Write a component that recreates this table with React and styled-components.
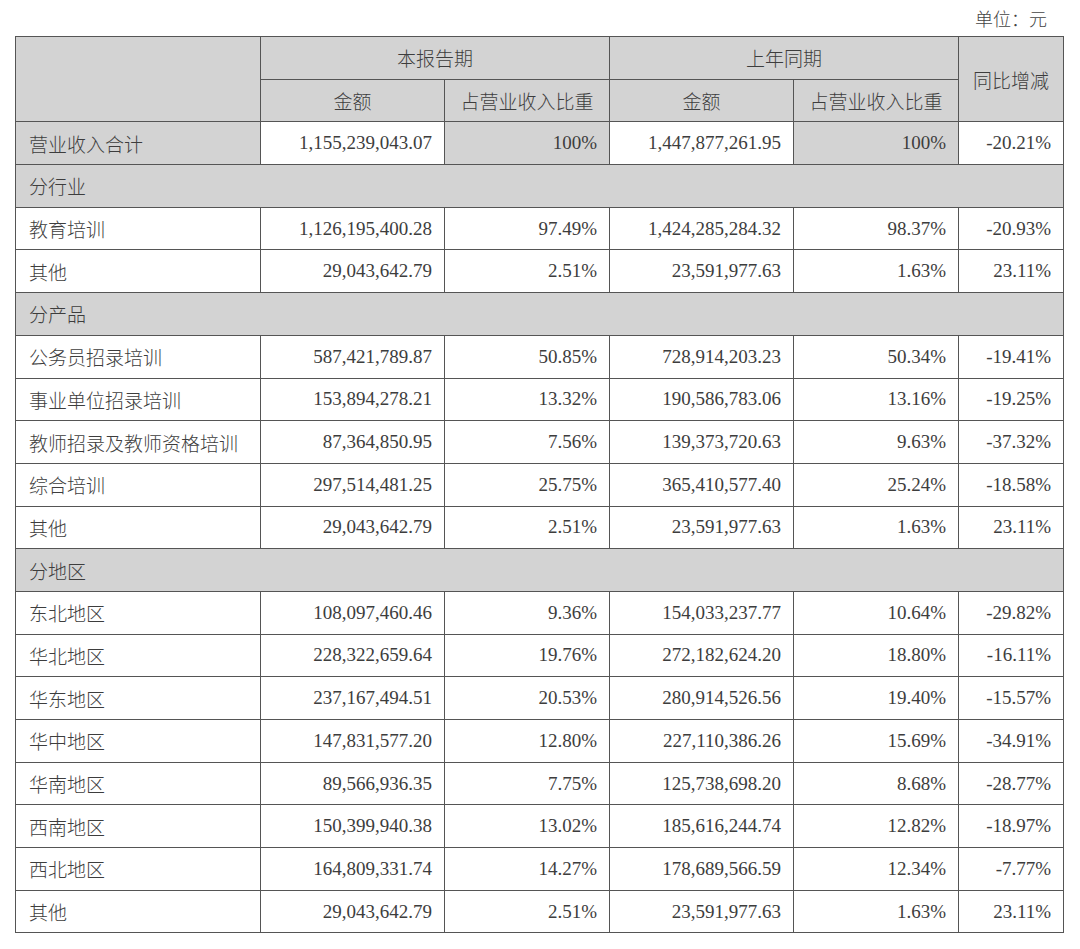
import React from 'react';
import styled, { createGlobalStyle } from 'styled-components';

const GlobalStyle = createGlobalStyle`
  body {
    margin: 0;
    background: #fff;
    font-family: "Liberation Serif", "Noto Sans CJK SC", serif;
    color: #3d3d3d;
  }
`;

const Page = styled.div`
  width: 1080px;
  padding: 0 0 0 15px;
  box-sizing: border-box;
`;

const Unit = styled.div`
  height: 36px;
  display: flex;
  align-items: center;
  justify-content: flex-end;
  padding-right: 33px;
  font-size: 18px;
  font-weight: 300;
  color: #444;
`;

const Table = styled.table`
  border-collapse: collapse;
  width: 1048px;
  table-layout: fixed;
  font-size: 19px;
  font-weight: 300;
`;

const Row = styled.tr`
  height: 42.7px;
`;

const Cell = styled.td`
  border: 1px solid #555;
  padding: 0 12px 0 13px;
  height: 42.7px;
  box-sizing: border-box;
  white-space: nowrap;
  text-align: ${p => p.$align || 'left'};
  background: ${p => (p.$gray ? '#d3d3d3' : '#fff')};
  vertical-align: middle;
`;

const HeadCell = styled(Cell)`
  text-align: center;
  background: #d3d3d3;
  padding: 0;
`;

const regions = [
  ['东北地区', '108,097,460.46', '9.36%', '154,033,237.77', '10.64%', '-29.82%'],
  ['华北地区', '228,322,659.64', '19.76%', '272,182,624.20', '18.80%', '-16.11%'],
  ['华东地区', '237,167,494.51', '20.53%', '280,914,526.56', '19.40%', '-15.57%'],
  ['华中地区', '147,831,577.20', '12.80%', '227,110,386.26', '15.69%', '-34.91%'],
  ['华南地区', '89,566,936.35', '7.75%', '125,738,698.20', '8.68%', '-28.77%'],
  ['西南地区', '150,399,940.38', '13.02%', '185,616,244.74', '12.82%', '-18.97%'],
  ['西北地区', '164,809,331.74', '14.27%', '178,689,566.59', '12.34%', '-7.77%'],
  ['其他', '29,043,642.79', '2.51%', '23,591,977.63', '1.63%', '23.11%'],
];

const sections = [
  {
    title: '分行业',
    rows: [
      ['教育培训', '1,126,195,400.28', '97.49%', '1,424,285,284.32', '98.37%', '-20.93%'],
      ['其他', '29,043,642.79', '2.51%', '23,591,977.63', '1.63%', '23.11%'],
    ],
  },
  {
    title: '分产品',
    rows: [
      ['公务员招录培训', '587,421,789.87', '50.85%', '728,914,203.23', '50.34%', '-19.41%'],
      ['事业单位招录培训', '153,894,278.21', '13.32%', '190,586,783.06', '13.16%', '-19.25%'],
      ['教师招录及教师资格培训', '87,364,850.95', '7.56%', '139,373,720.63', '9.63%', '-37.32%'],
      ['综合培训', '297,514,481.25', '25.75%', '365,410,577.40', '25.24%', '-18.58%'],
      ['其他', '29,043,642.79', '2.51%', '23,591,977.63', '1.63%', '23.11%'],
    ],
  },
  { title: '分地区', rows: regions },
];

function DataRow({ data, total }) {
  const [name, a1, p1, a2, p2, yoy] = data;
  return (
    <Row>
      <Cell $gray={total}>{name}</Cell>
      <Cell $align="right">{a1}</Cell>
      <Cell $align="right" $gray={total}>{p1}</Cell>
      <Cell $align="right">{a2}</Cell>
      <Cell $align="right" $gray={total}>{p2}</Cell>
      <Cell $align="right">{yoy}</Cell>
    </Row>
  );
}

export default function App() {
  return (
    <Page>
      <GlobalStyle />
      <Unit>单位：元</Unit>
      <Table>
        <colgroup>
          <col style={{ width: 245 }} />
          <col style={{ width: 184 }} />
          <col style={{ width: 165 }} />
          <col style={{ width: 184 }} />
          <col style={{ width: 165 }} />
          <col style={{ width: 105 }} />
        </colgroup>
        <thead>
          <Row>
            <HeadCell rowSpan={2} />
            <HeadCell colSpan={2}>本报告期</HeadCell>
            <HeadCell colSpan={2}>上年同期</HeadCell>
            <HeadCell rowSpan={2}>同比增减</HeadCell>
          </Row>
          <Row>
            <HeadCell>金额</HeadCell>
            <HeadCell>占营业收入比重</HeadCell>
            <HeadCell>金额</HeadCell>
            <HeadCell>占营业收入比重</HeadCell>
          </Row>
        </thead>
        <tbody>
          <DataRow total data={['营业收入合计', '1,155,239,043.07', '100%', '1,447,877,261.95', '100%', '-20.21%']} />
          {sections.map(s => (
            <React.Fragment key={s.title}>
              <Row>
                <Cell $gray colSpan={6}>{s.title}</Cell>
              </Row>
              {s.rows.map((r, i) => (
                <DataRow key={i} data={r} />
              ))}
            </React.Fragment>
          ))}
        </tbody>
      </Table>
    </Page>
  );
}
